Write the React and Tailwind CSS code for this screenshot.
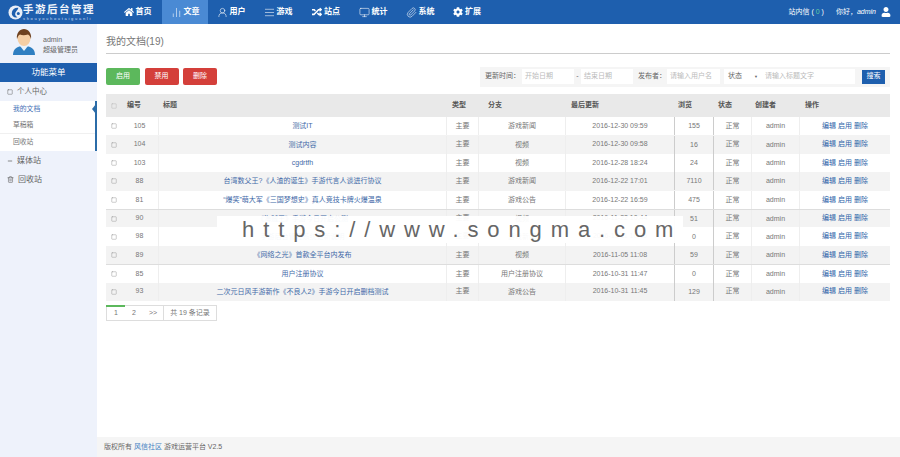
import React from 'react';
import { ChartNoAxesColumn, UserRound, AlignJustify, Monitor, Paperclip, Square, Trash2, Minus } from 'lucide-react';
import { FaHome, FaRandom, FaCog, FaUser } from 'react-icons/fa';

const nav = [
  [FaHome, '首页', 'w-[49px]', 0],
  [ChartNoAxesColumn, '文章', 'w-[46px]', 1],
  [UserRound, '用户', 'w-[46px]', 1],
  [AlignJustify, '游戏', 'w-[48px]', 1],
  [FaRandom, '站点', 'w-[48px]', 0],
  [Monitor, '统计', 'w-[46px]', 1],
  [Paperclip, '系统', 'w-[48px]', 1],
  [FaCog, '扩展', 'w-[46px]', 0],
];

const rows = [
  ['105', '测试IT', '游戏新闻', '2016-12-30 09:59', '155'],
  ['104', '测试内容', '视频', '2016-12-30 09:58', '16'],
  ['103', 'cgdrtfh', '视频', '2016-12-28 18:24', '24'],
  ['88', '台湾数父王?《人渣的诞生》手游代言人谈进行协议', '游戏新闻', '2016-12-22 17:01', '7110'],
  ['81', '“爆笑”萌大军《三国梦想史》真人竞技卡牌火爆温泉', '游戏公告', '2016-12-22 16:59', '475'],
  ['90', '《海贼王》手游今日开启公测', '视频', '2016-11-22 10:44', '51'],
  ['98', '手游后台管理系统更新说明', '游戏新闻', '2016-11-11 10:15', '0'],
  ['89', '《网络之光》首款全平台内发布', '视频', '2016-11-05 11:08', '59'],
  ['85', '用户注册协议', '用户注册协议', '2016-10-31 11:47', '0'],
  ['93', '二次元日风手游新作《不良人2》手游今日开启删档测试', '游戏公告', '2016-10-31 11:45', '129'],
];

const cols = ['w-[15px]', 'w-[37px]', 'w-[289px]', 'w-[31px]', 'w-[88px]', 'w-[108px]', 'w-[40px]', 'w-[37px]', 'w-[49px]', 'w-[90px]'];

function Avatar() {
  return (
    <svg width="22" height="26" viewBox="0 0 22 26" className="mb-[3px] shrink-0">
      <path d="M0 26c0-6 4-9 11-9s11 3 11 9z" fill="#2f7fc1" />
      <path d="M7 17l4 5 4-5z" fill="#eaf2fa" />
      <ellipse cx="11" cy="9.5" rx="6.5" ry="7.5" fill="#f6cfa4" />
      <path d="M4 10C3 4 7 0 11 0s8 4 7 10c-1-3-2-4-3-4.500-3 1-6 1-8 0-2 1-2 2-3 4.500z" fill="#6f4220" />
    </svg>
  );
}

function Logo() {
  return (
    <svg width="15" height="15" viewBox="0 0 16 16" className="shrink-0">
      <circle cx="8" cy="8" r="7.500" fill="#e8eef7" />
      <path d="M11 3a6 6 0 0 0-7 6c0 3 3 5 6 4-2-1-3-3-2-5 1-2 3-3 3-5z" fill="#1e5fae" />
      <circle cx="11" cy="9" r="1.600" fill="#1e5fae" />
    </svg>
  );
}

export default function App() {
  return (
    <div className="relative flex h-[457px] w-[900px] flex-col overflow-hidden bg-white font-['Liberation_Sans','Noto_Sans_CJK_SC',sans-serif] text-[7px] text-[#777]">
      <header className="flex h-6 shrink-0 items-stretch bg-[#1e5fae] text-white">
        <div className="flex w-[113px] items-center pl-2">
          <Logo />
          <div className="flex flex-col leading-none">
            <span className="whitespace-nowrap text-[10.500px] font-bold leading-[13px] tracking-[1.500px] text-[#eef3fa]">手游后台管理</span>
            <span className="text-[4px] leading-[5px] tracking-[1.700px] text-[#cfdcf0]">shouyouhoutaiguanli</span>
          </div>
        </div>
        <nav className="flex items-stretch text-[8px] font-bold">
          {nav.map(([Icon, label, w, thin]) => (
            <div key={label} className={`flex items-center justify-center gap-[2px] ${w} ${label === '文章' ? 'bg-[#4a8ad4]' : ''}`}>
              {thin ? <Icon size={11} strokeWidth={1.25} /> : <Icon size={10} />}
              <span>{label}</span>
            </div>
          ))}
        </nav>
        <div className="ml-auto flex items-center pr-[9px] text-[7px]">
          <span>站内信 ( <span className="text-[#5fd0a0]">0</span> )</span>
          <span className="ml-3">你好，<i>admin</i></span>
          <FaUser size={10} className="ml-[5px]" />
        </div>
      </header>

      <div className="flex min-h-0 flex-1">
        <aside className="w-[97px] shrink-0 bg-[#eef2fb]">
          <div className="flex h-[39px] items-center pl-[13px]">
            <Avatar />
            <div className="ml-[8px] pt-[2px] text-[7px] leading-[10px] text-[#666]">
              <div>admin</div>
              <div>超级管理员</div>
            </div>
          </div>
          <div className="flex h-[19px] items-center justify-center bg-[#1e5fae] text-[8.500px] text-white">功能菜单</div>
          <div className="flex h-[19px] items-center gap-[4px] pl-[7px] text-[7.500px] text-[#666]">
            <Square size={6} />
            <span>个人中心</span>
          </div>
          <div className="relative border-r-2 border-[#2b6ca8] text-[6.800px]">
            <div className="flex h-[16px] items-center bg-white pl-[13px] text-[#3f6fb5]">我的文档</div>
            <div className="flex h-[17px] items-center border-b border-[#f0f0f0] bg-white pl-[13px]">草稿箱</div>
            <div className="flex h-[17px] items-center bg-white pl-[13px]">回收站</div>
            <div className="absolute right-[-1px] top-[3px] h-0 w-0 border-y-[5px] border-r-[4px] border-y-transparent border-r-[#2b6ca8]" />
          </div>
          <div className="flex h-[19px] items-center gap-[4px] pl-[7px] text-[8px] text-[#666]">
            <Minus size={6} strokeWidth={3} />
            <span>媒体站</span>
          </div>
          <div className="flex h-[19px] items-center gap-[4px] pl-[7px] text-[8px] text-[#666]">
            <Trash2 size={7} />
            <span>回收站</span>
          </div>
        </aside>

        <main className="flex min-w-0 flex-1 flex-col">
          <div className="flex-1 pl-[9px] pr-[10px]">
            <div className="flex h-[30px] items-center border-b border-[#ccc] pt-[5px] text-[10px] text-[#777]">我的文档(19)</div>
            <div className="mt-[14px] flex h-[17px] items-center justify-between">
              <div className="flex gap-[4.500px] text-[7px] text-white">
                <button className="h-[17px] w-[34px] rounded-[2px] bg-[#5cb85c]">启用</button>
                <button className="h-[17px] w-[34px] rounded-[2px] bg-[#d43f3a]">禁用</button>
                <button className="h-[17px] w-[34px] rounded-[2px] bg-[#d43f3a]">删除</button>
              </div>
              <div className="flex h-[20px] items-center whitespace-nowrap bg-[#f5f5f5] px-[5px] text-[7px] text-[#666]">
                <span className="w-[37px] shrink-0">更新时间：</span>
                <span className="flex h-[15px] w-[52px] items-center bg-white pl-[3px] text-[#bbb]">开始日期</span>
                <span className="w-[7px] text-center">-</span>
                <span className="flex h-[15px] w-[52px] items-center bg-white pl-[3px] text-[#bbb]">结束日期</span>
                <span className="ml-[5px] w-[27px] shrink-0">发布者：</span>
                <span className="ml-[2px] flex h-[15px] w-[53px] items-center bg-white pl-[3px] text-[#bbb]">请输入用户名</span>
                <span className="ml-[4px] flex h-[15px] w-[38px] items-center justify-between bg-white px-[4px]">状态<span className="text-[4px]">▼</span></span>
                <span className="flex h-[15px] w-[93px] items-center bg-white pl-[3px] text-[#bbb]">请输入标题文字</span>
                <button className="ml-[7px] h-[14px] w-[23px] bg-[#1e5fae] text-white">搜索</button>
              </div>
            </div>

            <div className="mt-[9px]">
              <div className="flex h-[23px] items-center bg-[#e9e9e9] font-bold text-[#555]">
                <div className={`${cols[0]} flex justify-center`}><Square size={6} className="text-[#bbb]" /></div>
                <div className={`${cols[1]} pl-[6px]`}>编号</div>
                <div className={`${cols[2]} pl-[5px]`}>标题</div>
                <div className={`${cols[3]} pl-[5px]`}>类型</div>
                <div className={`${cols[4]} pl-[10px]`}>分支</div>
                <div className={`${cols[5]} pl-[5px]`}>最后更新</div>
                <div className={`${cols[6]} pl-[4px]`}>浏览</div>
                <div className={`${cols[7]} pl-[4px]`}>状态</div>
                <div className={`${cols[8]} pl-[4px]`}>创建者</div>
                <div className={`${cols[9]} pl-[5px]`}>操作</div>
              </div>
              {rows.map((r, i) => (
                <div key={r[0]} className={`flex h-[18.400px] items-center text-center ${i % 2 ? 'bg-[#f3f3f3]' : 'bg-white'} ${i === 5 || i === 8 ? 'border-t border-[#ddd]' : ''}`}>
                  <div className={`${cols[0]} flex justify-center`}><Square size={6} className="text-[#999]" /></div>
                  <div className={cols[1]}>{r[0]}</div>
                  <div className={`${cols[2]} truncate border-x border-[#eee] leading-[18px] text-[#3f6aa8]`}>{r[1]}</div>
                  <div className={cols[3]}>主要</div>
                  <div className={`${cols[4]} border-x border-[#eee] leading-[18px]`}>{r[2]}</div>
                  <div className={cols[5]}>{r[3]}</div>
                  <div className={`${cols[6]} border-x border-[#ccc] leading-[18px]`}>{r[4]}</div>
                  <div className={cols[7]}>正常</div>
                  <div className={`${cols[8]} border-x border-[#eee] leading-[18px]`}>admin</div>
                  <div className={`${cols[9]} text-[#2b62a8]`}>编辑 启用 删除</div>
                </div>
              ))}
            </div>

            <div className="mt-[4px] flex h-[16px] w-[111px] items-stretch border border-[#ddd] text-[7px]">
              <div className="relative flex w-[18px] items-center justify-center">
                <span className="absolute left-[-1px] top-[-1px] h-[2px] w-[19px] bg-[#5cb85c]" />1
              </div>
              <div className="flex w-[18px] items-center justify-center">2</div>
              <div className="flex w-[21px] items-center justify-center border-r border-[#ddd]">&gt;&gt;</div>
              <div className="flex flex-1 items-center justify-center">共 19 条记录</div>
            </div>
          </div>
          <footer className="flex h-[20px] shrink-0 items-center bg-[#f5f5f5] pl-[7px] text-[7px] text-[#666]">
            <span>版权所有 <span className="text-[#3f7fc1]">风信社区</span> 游戏运营平台 V2.5</span>
          </footer>
        </main>
      </div>

      <div className="absolute left-[217px] top-[216px] flex h-[27px] w-[466px] items-center whitespace-nowrap bg-white/95 pl-[25px] text-[22px] tracking-[8.900px] text-[#666]">
        https://www.songma.com
      </div>
    </div>
  );
}
